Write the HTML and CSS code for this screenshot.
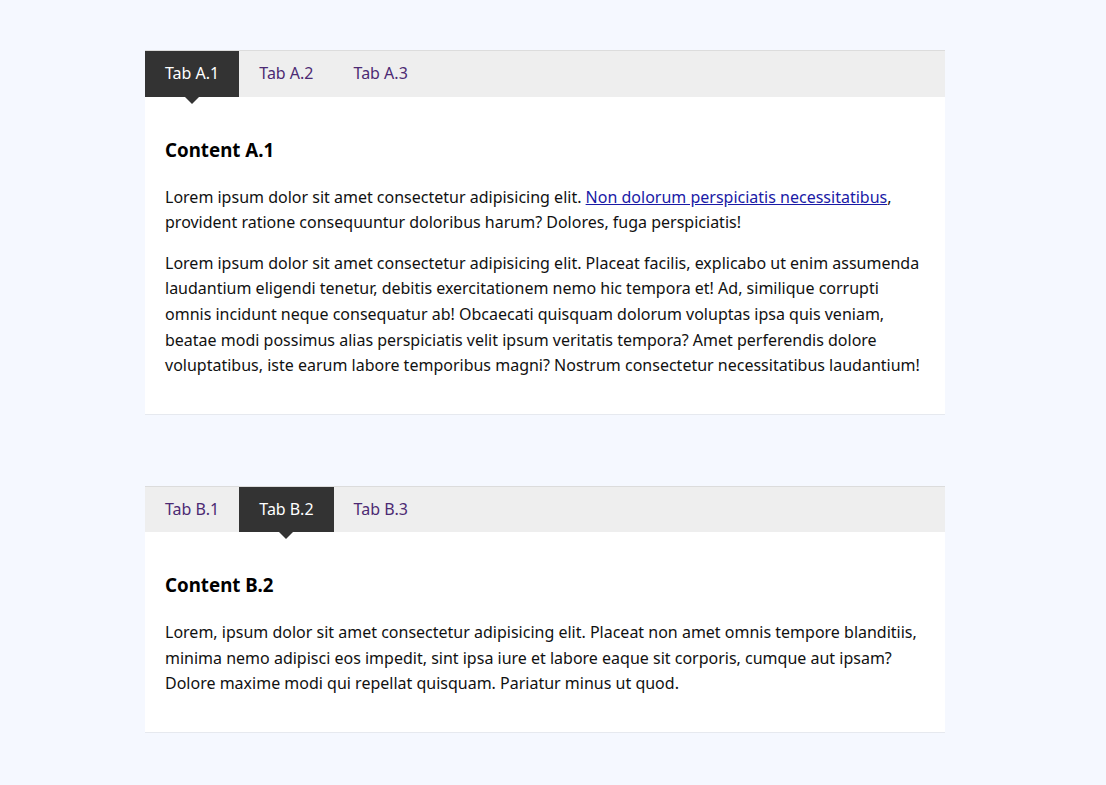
FILE: index.html
```html
<!DOCTYPE html>
<html lang="en">
<head>
<meta charset="utf-8">
<title>Tabs</title>
<link rel="stylesheet" href="styles.css">
</head>
<body>
<main class="page">
  <section class="tabs">
    <nav class="tab-list">
      <a class="tab active" href="#a1">Tab A.1</a>
      <a class="tab" href="#a2">Tab A.2</a>
      <a class="tab" href="#a3">Tab A.3</a>
    </nav>
    <div class="panel">
      <h3>Content A.1</h3>
      <p>Lorem ipsum dolor sit amet consectetur adipisicing elit. <a class="link" href="#x">Non dolorum perspiciatis necessitatibus</a>, provident ratione consequuntur doloribus harum? Dolores, fuga perspiciatis!</p>
      <p>Lorem ipsum dolor sit amet consectetur adipisicing elit. Placeat facilis, explicabo ut enim assumenda laudantium eligendi tenetur, debitis exercitationem nemo hic tempora et! Ad, similique corrupti omnis incidunt neque consequatur ab! Obcaecati quisquam dolorum voluptas ipsa quis veniam, beatae modi possimus alias perspiciatis velit ipsum veritatis tempora? Amet perferendis dolore voluptatibus, iste earum labore temporibus magni? Nostrum consectetur necessitatibus laudantium!</p>
    </div>
  </section>
  <section class="tabs">
    <nav class="tab-list">
      <a class="tab" href="#b1">Tab B.1</a>
      <a class="tab active" href="#b2">Tab B.2</a>
      <a class="tab" href="#b3">Tab B.3</a>
    </nav>
    <div class="panel">
      <h3>Content B.2</h3>
      <p>Lorem, ipsum dolor sit amet consectetur adipisicing elit. Placeat non amet omnis tempore blanditiis, minima nemo adipisci eos impedit, sint ipsa iure et labore eaque sit corporis, cumque aut ipsam? Dolore maxime modi qui repellat quisquam. Pariatur minus ut quod.</p>
    </div>
  </section>
</main>
</body>
</html>
```

FILE: styles.css
```css
html, body {
  margin: 0;
  padding: 0;
}
body {
  background: #f5f8ff;
  font-family: "Noto Sans", "Open Sans", sans-serif;
  font-size: 16px;
  line-height: 1.6;
  color: #111;
  padding: 50px 16px 0 0;
}
.page {
  width: 800px;
  margin: 0 auto;
  display: flex;
  flex-direction: column;
  gap: 71px;
}
.tab-list {
  display: flex;
  background: #eeeeee;
  border-top: 1px solid #dcdcdc;
}
.tab {
  position: relative;
  padding: 10px 20px 10px 20px;
  color: #4c2a73;
  text-decoration: none;
}
.tab.active {
  background: #333333;
  color: #ffffff;
}
.tab.active::after {
  content: "";
  position: absolute;
  left: 50%;
  top: 100%;
  margin-left: -7px;
  border-left: 7px solid transparent;
  border-right: 7px solid transparent;
  border-top: 7px solid #333333;
}
.panel {
  background: #ffffff;
  padding: 20px;
  display: flow-root;
  border-bottom: 1px solid #e6e9ef;
}
.panel h3 {
  font-size: 18.72px;
  font-weight: 700;
  margin: 18px 0 20px;
  color: #000;
}
.panel p {
  margin: 0 0 15px;
}
.link {
  color: #1a1aa6;
  text-decoration: underline;
}
```
